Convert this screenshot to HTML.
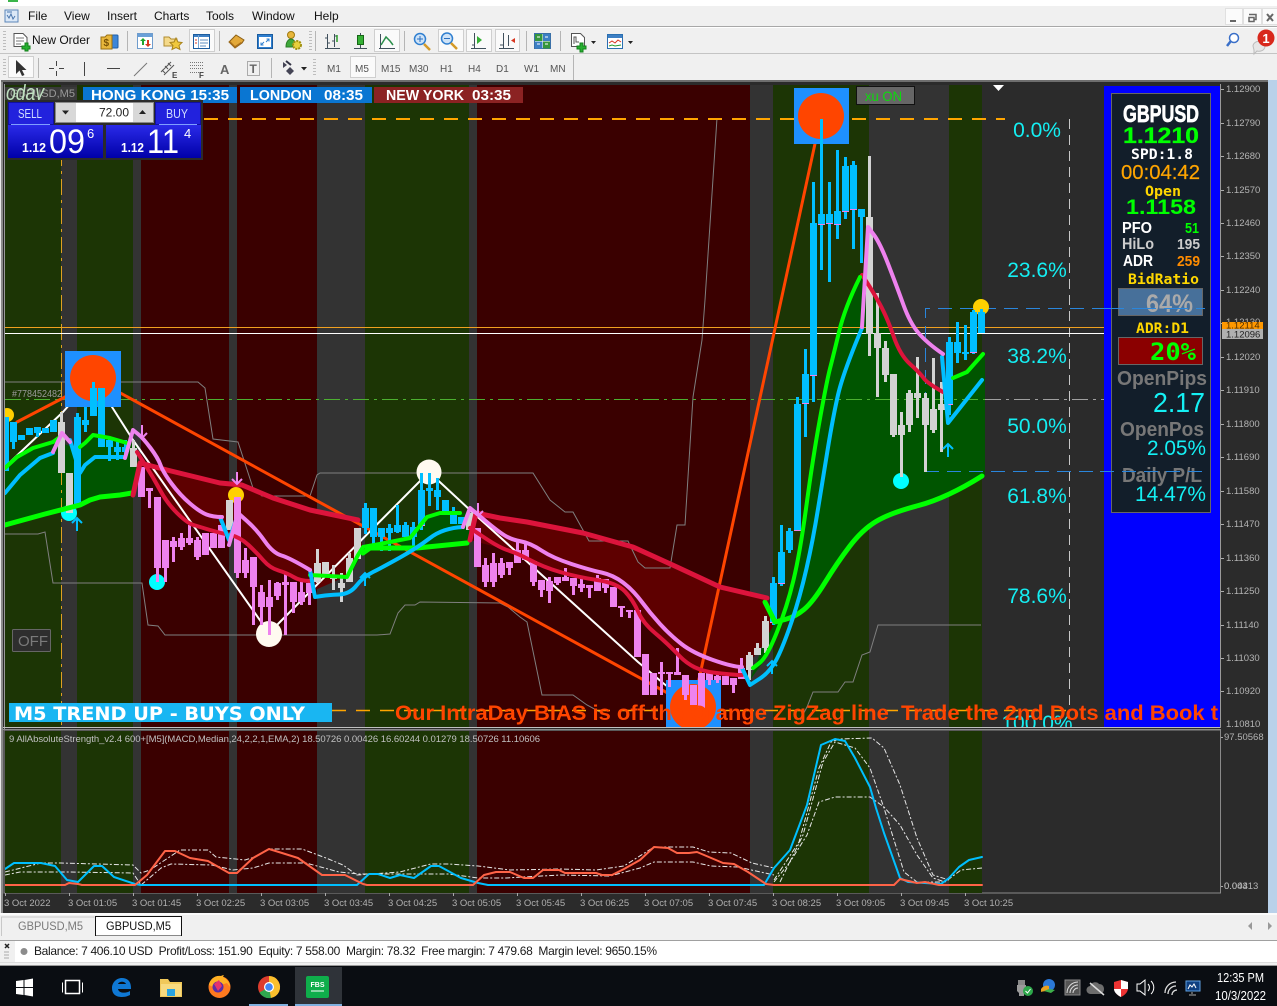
<!DOCTYPE html>
<html><head><meta charset="utf-8"><title>MT4 GBPUSD,M5</title>
<style>
html,body{margin:0;padding:0;background:#f0f0f0;width:1277px;height:1006px;overflow:hidden}
svg{display:block}
text{font-family:"Liberation Sans",sans-serif}
.ma{fill:none;stroke-linejoin:round;stroke-linecap:round}
.m{font-size:12px;fill:#111}
.tf{font-size:10px;fill:#555}
.pr{font-size:9.5px;fill:#b4b4b4}
.tm{font-size:9.5px;fill:#b0b0b0}
.fib{font-size:21px;fill:#14eef2;text-anchor:middle}
.mono{font-family:"DejaVu Sans Mono",monospace;font-weight:bold}
.b{font-weight:bold}
.ses{font-size:14.5px;font-weight:bold;fill:#fff}
.pb{fill:#fafafa;stroke:#cfcfcf}
</style></head><body>
<svg xmlns="http://www.w3.org/2000/svg" width="1277" height="1006" viewBox="0 0 1277 1006">
<defs>
<clipPath id="cm"><rect x="5" y="85" width="1215" height="642"/></clipPath>
<clipPath id="cs"><rect x="5" y="731" width="1215" height="162"/></clipPath>
<clipPath id="ct"><rect x="395" y="695" width="825" height="32"/></clipPath>
<linearGradient id="bq" x1="0" y1="0" x2="0" y2="1"><stop offset="0" stop-color="#2a2ae8"/><stop offset="1" stop-color="#0000a8"/></linearGradient>
</defs>

<!-- window chrome -->
<rect width="1277" height="1006" fill="#f0f0f0"/>
<rect width="1277" height="6" fill="#fff"/>
<rect x="8" y="0" width="10" height="2" fill="#3bb54a"/>
<rect y="26" width="1277" height="1" fill="#a8a8a8"/>
<rect y="53" width="1277" height="1" fill="#c4c4c4"/>
<rect x="0" y="27" width="1277" height="1" fill="#fff"/>

<!-- menu -->
<g transform="translate(4,8)"><rect x="1" y="2" width="13" height="12" fill="#dbe8f7" stroke="#5b86b8"/><path d="M3 4h5M3 7l2 3 2-4 2 5 2-3" fill="none" stroke="#4a76ad"/></g>
<text class="m" x="28" y="20">File</text><text class="m" x="64" y="20">View</text><text class="m" x="107" y="20">Insert</text><text class="m" x="154" y="20">Charts</text><text class="m" x="206" y="20">Tools</text><text class="m" x="252" y="20">Window</text><text class="m" x="314" y="20">Help</text>
<g fill="#fbfbfb" stroke="#e0e0e0"><rect x="1225.500" y="8.500" width="17" height="16"/><rect x="1243.500" y="8.500" width="18" height="16"/><rect x="1262.500" y="8.500" width="15" height="16"/></g>
<path d="M1230 21h6" stroke="#666" stroke-width="2"/>
<path d="M1249 14.500h7v5h-2M1249 17.500h5v4h-5z" fill="none" stroke="#666" stroke-width="1.500"/>
<path d="M1267 14l6 7M1273 14l-6 7" stroke="#666" stroke-width="2"/>

<!-- toolbar 1 -->
<g fill="#bdbdbd"><rect x="3" y="31" width="3" height="1"/><rect x="3" y="34" width="3" height="1"/><rect x="3" y="37" width="3" height="1"/><rect x="3" y="40" width="3" height="1"/><rect x="3" y="43" width="3" height="1"/><rect x="3" y="46" width="3" height="1"/><rect x="3" y="49" width="3" height="1"/>
<rect x="3" y="59" width="3" height="1"/><rect x="3" y="62" width="3" height="1"/><rect x="3" y="65" width="3" height="1"/><rect x="3" y="68" width="3" height="1"/><rect x="3" y="71" width="3" height="1"/><rect x="3" y="74" width="3" height="1"/>
<rect x="309" y="31" width="3" height="1"/><rect x="309" y="34" width="3" height="1"/><rect x="309" y="37" width="3" height="1"/><rect x="309" y="40" width="3" height="1"/><rect x="309" y="43" width="3" height="1"/><rect x="309" y="46" width="3" height="1"/><rect x="309" y="49" width="3" height="1"/>
<rect x="313" y="59" width="3" height="1"/><rect x="313" y="62" width="3" height="1"/><rect x="313" y="65" width="3" height="1"/><rect x="313" y="68" width="3" height="1"/><rect x="313" y="71" width="3" height="1"/><rect x="313" y="74" width="3" height="1"/></g>
<path d="M127.500 31v20M219.500 31v20M315.500 31v20M404.500 31v20M526.500 31v20M560.500 31v20M38.500 58v20M271.500 58v20M573.500 55v25" stroke="#b5b5b5"/>
<!-- new order -->
<path d="M14 33.500h9l4 4v9h-13z" fill="#fff" stroke="#555"/><path d="M16 38h8M16 41h8M16 44h5" stroke="#777"/>
<path d="M22 46h3v-3h3v3h2v3h-2v2h-3v-2h-3z" fill="#26b030" stroke="#14801c"/>
<text x="32" y="44" font-size="12" fill="#111" textLength="58" lengthAdjust="spacingAndGlyphs">New Order</text>
<!-- money -->
<rect x="108" y="35" width="10" height="13" rx="1" fill="#3d86d8" stroke="#1f5fa8"/>
<path d="M101 37h4l2-2h5v14h-11z" fill="#e8b73c" stroke="#9a6f10"/><text x="103.500" y="46" font-size="10" font-weight="bold" fill="#7a5306">$</text>
<!-- market watch -->
<rect x="137.500" y="33.500" width="15" height="15" fill="#fff" stroke="#6f9ccc"/><rect x="138" y="34" width="14" height="3" fill="#6aa0d8"/>
<path d="M143 38l3 3h-2v4h-2v-4h-2z" fill="#1fa52d"/><path d="M148 47l-3-3h2v-4h2v4h2z" fill="#d9351f"/>
<!-- star folder -->
<path d="M164 37h5l2 2h6v7h-13z" fill="#f4d98a" stroke="#b08c30"/><path d="M176 38l2 4 4 .5-3 3 1 4-4-2-4 2 1-4-3-3 4-.5z" fill="#f0c83c" stroke="#a8821a"/>
<!-- pressed list -->
<rect class="pb" x="189.500" y="29.500" width="25" height="22"/>
<rect x="193.500" y="34.500" width="16" height="14" fill="#fff" stroke="#1b5c9e"/><rect x="194" y="35" width="15" height="2" fill="#3d7fc4"/><path d="M198.500 35v13" stroke="#7aa6d4"/><path d="M200 40h8M200 43h8M200 46h6" stroke="#5f8fc2"/><path d="M195 40h2M195 43h2" stroke="#d9351f"/>
<!-- book -->
<path d="M229 42l7-7 8 5-2 3-7 5z" fill="#e3a93a" stroke="#8b5f14"/><path d="M229 42l6 6 7-5-1-1-6 4-5-5z" fill="#a96e1a"/>
<!-- expand -->
<rect x="257.500" y="34.500" width="15" height="14" fill="#2f7fd0" stroke="#1b5c9e"/><rect x="259" y="37" width="12" height="10" fill="#fff"/><path d="M261 45l3-3M261 42.500v2.500h2.500M269 39l-3 3M269 41.500v-2.500h-2.500" stroke="#2f7fd0" fill="none"/>
<!-- people gear -->
<circle cx="291" cy="35" r="3.500" fill="#e8b73c" stroke="#a07a10"/><path d="M286 47c0-6 3-8 5-8s4 2 4 4l-3 4z" fill="#3ea83a" stroke="#2a7c26"/><circle cx="297" cy="45" r="4" fill="#e8d03c" stroke="#a09010" stroke-width="2" stroke-dasharray="2 1"/>
<!-- charts -->
<path d="M325 48.500h15M327.500 34v15M334.500 34v13M325 38h3M327 43h3M332 41h3M334 36h3" stroke="#40505c" fill="none"/><path d="M337 35v7" stroke="#2a9a2a" stroke-width="1.500"/>
<path d="M354 48.500h13M360.500 33v15" stroke="#40505c"/><rect x="357.500" y="35.500" width="6" height="9" fill="#35b035" stroke="#166616"/>
<rect class="pb" x="374.500" y="29.500" width="25" height="22"/><path d="M379 48.500h16M380.500 34v15" stroke="#40505c"/><path d="M381 45l5-8 4 4 3 4" fill="none" stroke="#2b8f4b" stroke-width="1.500"/>
<!-- zoom -->
<circle cx="420" cy="39" r="5.500" fill="#cfe3f7" stroke="#2f7fd0" stroke-width="1.500"/><path d="M417 39h6M420 36v6" stroke="#2a6fc0"/><path d="M424 44l6 6" stroke="#d49a28" stroke-width="2.500"/>
<rect class="pb" x="438.500" y="29.500" width="25" height="22"/><circle cx="447" cy="38.500" r="5.500" fill="#cfe3f7" stroke="#2f7fd0" stroke-width="1.500"/><path d="M444 38.500h6" stroke="#2a6fc0"/><path d="M451 43l6 6" stroke="#d49a28" stroke-width="2.500"/>
<rect class="pb" x="466.500" y="29.500" width="25" height="22"/><path d="M471 48.500h15M474.500 33v15M472 45h3" stroke="#40505c"/><path d="M477 36l5 4-5 4z" fill="#35b035"/>
<rect class="pb" x="495.500" y="29.500" width="24" height="22"/><path d="M499 48.500h15M503.500 33v15M500 45h3M508.500 35v11" stroke="#40505c"/><path d="M515 38l-4 2.500 4 2.500z" fill="#d9351f"/>
<!-- grid -->
<rect x="534.500" y="33.500" width="16" height="15" fill="#fff" stroke="#3a70a8"/><rect x="535" y="34" width="7.500" height="7" fill="#35963c"/><rect x="543" y="34" width="7" height="7" fill="#3d7fc4"/><rect x="535" y="41.500" width="7.500" height="7" fill="#3d7fc4"/><rect x="543" y="41.500" width="7" height="7" fill="#35963c"/><path d="M537 37h3M545 37h3M537 44h3M545 44h3" stroke="#fff"/>
<!-- new chart -->
<path d="M571.500 33.500h9l4 4v9h-13z" fill="#fff" stroke="#555"/><path d="M574 44v-7h2v5h3" fill="none" stroke="#555"/><path d="M577 46h3v-3h3v3h3v3h-3v3h-3v-3h-3z" fill="#26b030" stroke="#14801c"/><path d="M591 41h5l-2.500 3z" fill="#222"/>
<rect x="607.500" y="34.500" width="15" height="14" fill="#fff" stroke="#2a6fb0"/><rect x="608" y="35" width="14" height="3" fill="#3d7fc4"/><path d="M609 43l3-2 3 2 3-3 3 2" fill="none" stroke="#d9351f"/><path d="M609 46l3-1 3 1 6-1" fill="none" stroke="#2a9a2a"/><path d="M628 41h5l-2.500 3z" fill="#222"/>

<!-- magnifier + alert -->
<circle cx="1234" cy="38" r="4.500" fill="#fff" stroke="#3a6fc8" stroke-width="1.500"/><path d="M1230.500 41.500l-3.500 4.500" stroke="#3a6fc8" stroke-width="2.500"/>
<path d="M1253 46a6 5 0 1 1 4 5l-3 3v-4z" fill="#e6e6e6" stroke="#bbb"/>
<circle cx="1266" cy="38" r="8.500" fill="#d8281c"/><text x="1266" y="43" font-size="13" font-weight="bold" fill="#fff" text-anchor="middle">1</text>

<!-- toolbar 2 -->
<rect class="pb" x="8.500" y="56.500" width="25" height="21"/>
<path d="M16 60v14l3.500-3.500 2.500 5.500 2.500-1-2.500-5h4.500z" fill="#333"/>
<path d="M49 68.500h5M59 68.500h5M56.500 61v5M56.500 71v5" stroke="#444"/>
<path d="M84.500 62v14" stroke="#444"/>
<path d="M107 68.500h13" stroke="#444"/>
<path d="M134 76l13-13" stroke="#777"/>
<path d="M161 72l10-10M164 75l10-10M165 66l3 3M168 63l3 3M162 70l3 3" stroke="#555" fill="none"/><text x="172" y="78" font-size="8" font-weight="bold" fill="#444">E</text>
<path d="M190 62.500h13M190 65.500h13M190 68.500h13M190 72.500h13" stroke="#777" stroke-dasharray="1 1"/><text x="199" y="78" font-size="8" font-weight="bold" fill="#444">F</text>
<text x="220" y="74" font-size="13" font-weight="bold" fill="#666">A</text>
<rect x="247.500" y="61.500" width="12" height="14" fill="none" stroke="#666" stroke-dasharray="1 1"/><text x="249.500" y="73" font-size="12" font-weight="bold" fill="#666">T</text>
<path d="M283 62l4 3-4 3zM290 67l4 4-4 4-4-4z" fill="#445"/><path d="M286 61l5 4" stroke="#334" stroke-width="2"/><path d="M301 67h6l-3 3.500z" fill="#222"/>
<rect class="pb" x="350.500" y="56.500" width="25" height="21"/>
<text class="tf" x="327" y="72">M1</text><text class="tf" x="355" y="72">M5</text><text class="tf" x="381" y="72">M15</text><text class="tf" x="409" y="72">M30</text><text class="tf" x="440" y="72">H1</text><text class="tf" x="468" y="72">H4</text><text class="tf" x="496" y="72">D1</text><text class="tf" x="524" y="72">W1</text><text class="tf" x="550" y="72">MN</text>

<!-- chart window -->
<rect x="0" y="80" width="1" height="833" fill="#e8e8e8"/>
<rect x="1" y="80" width="2" height="833" fill="#8a8a8a"/>
<rect x="3" y="80" width="1265" height="833" fill="#2b2b2b"/>
<rect x="1" y="80" width="1267" height="2" fill="#6e6e6e"/>
<rect x="1268" y="80" width="9" height="833" fill="#b9d1ea"/>
<rect x="3" y="82" width="2" height="831" fill="#2b2b2b"/>
<rect x="4" y="84" width="1" height="645" fill="#9a9a9a"/>

<g clip-path="url(#cm)">
<path fill="#1c3505" d="M5 84H61V727H5zM77 84H133V727H77zM365 84H469V727H365zM773 84H869V727H773zM949 84H982V727H949z"/>
<path fill="#3a0000" d="M141 84H229V727H141zM237 84H317V727H237zM477 84H750V727H477z"/>
<path fill="#333333" d="M61 84H77V727H61zM133 84H141V727H133zM229 84H237V727H229zM317 84H365V727H317zM469 84H477V727H469zM750 84H773V727H750zM869 84H949V727H869z"/>

<!-- fills -->
<path fill="#005500" d="M5 468L17 457 33 448 53 442 60 437 66 445 80 447 85 443 93 435 110 438 127 443 136 442 138 465 133 495 120 495 100 497 90 500 80 505 45 514 5 525z"/>
<path fill="#5e0000" d="M140 463L167 470 220 483 242 485 273 498 310 510 358 520 362 545 345 577 315 590 310 581 300 581 287 573 270 568 257 553 240 537 220 533 200 527 187 523 167 503 153 477 137 452z"/>
<path fill="#005500" d="M345 577L358 555 363 547 390 542 410 538 427 517 440 513 467 513 470 540 467 543 393 548 370 548 363 553 350 575z"/>
<path fill="#5e0000" d="M470 513L500 518 527 522 583 533 633 547 677 567 720 587 767 598 775 622 767 640 745 668 733 675 693 670 667 643 643 623 633 600 617 583 577 577 543 567 517 553 500 548 470 540z"/>
<path fill="#005500" d="M750 680L767 657 787 607 800 553 813 457 833 357 845 307 860 277 872 290 887 317 900 355 920 373 943 392 953 378 967 372 985 354 985 476 947 498 890 513 862 530 837 563 813 602 795 617 775 623 765 640z"/>

<!-- envelope -->
<polyline fill="none" stroke="#7f7f7f" points="5,382 198,382 205,388 213,439 238,442 253,488 262,496 310,496 317,475 320,473 533,473 550,500 565,512 573,512 589,541 628,541 638,562 645,568 670,568 677,525 685,525 693,397 702,340 705,300 717,118"/>
<polyline fill="none" stroke="#7f7f7f" points="5,534 38,534 45,532 53,583 142,583 148,625 158,626 165,635 377,635 390,634 398,613 405,605 415,605 420,602 500,603 508,607 520,617 527,622 542,695 573,695 587,705 600,712"/>
<polyline fill="none" stroke="#7f7f7f" points="800,720 807,707 813,692 838,692 845,682 853,682 862,655 870,652 878,625 981,625"/>

<!-- horizontal levels -->
<path d="M204 119H1005" stroke="#ffa500" stroke-width="2" stroke-dasharray="14 10"/>
<path d="M332 710.500H1069" stroke="#ffa500" stroke-width="1.500" stroke-dasharray="14 10"/>
<path d="M5 399.500H985" stroke="#4cb030" stroke-dasharray="16 5 3 5"/>
<path d="M985 399.500H1104" stroke="#a0a0a0" stroke-dasharray="16 5 3 5"/>
<path d="M61.500 150V727" stroke="#e0a020" stroke-dasharray="16 5 3 5"/>
<path d="M1069.500 119V711" stroke="#c8c8c8" stroke-dasharray="10 6"/>
<path d="M5 327.500H1104" stroke="#f0a020"/>
<path d="M5 333.500H1104" stroke="#fff"/>
<path d="M925.500 472V308.500H1204" fill="none" stroke="#2a86dc" stroke-dasharray="14 8"/>
<path d="M925 471.500H1204" fill="none" stroke="#2a86dc" stroke-dasharray="14 8"/>

<!-- zigzag -->
<polyline class="ma" stroke="#ff4500" stroke-width="3" points="17,422 65,397 93,378 693,707 821,116"/>
<polyline class="ma" stroke="#fff" stroke-width="2" points="8,464 63,412 93,378 112,407 133,440 269,633 429,472 470,510 638,662 663,683 693,707"/>

<!-- squares -->
<rect x="65" y="351" width="56" height="56" fill="#1e90ff"/><circle cx="93" cy="378" r="23" fill="#ff4500"/>
<rect x="794" y="88" width="55" height="56" fill="#1e90ff"/><circle cx="821" cy="116" r="23" fill="#ff4500"/>
<rect x="666" y="680" width="55" height="60" fill="#1e90ff"/><circle cx="693" cy="707" r="23" fill="#ff4500"/>

<!-- white circles -->
<circle cx="269" cy="634" r="13" fill="#fffaf0"/><circle cx="429" cy="472" r="12.500" fill="#fffaf0"/>

<!-- yellow and cyan dots -->
<circle cx="7" cy="415" r="7" fill="#ffd000"/><circle cx="236" cy="495" r="8" fill="#ffd000"/><circle cx="981" cy="307" r="8" fill="#ffd000"/>
<circle cx="69" cy="513" r="8" fill="#00ffff"/><circle cx="157" cy="582" r="8" fill="#00ffff"/><circle cx="901" cy="481" r="8" fill="#00ffff"/>

<!-- candle wicks -->
<path fill="none" stroke="#00bfff" stroke-width="3" d="M13.500 422V449M37.500 427V437M77.500 413V505M85.500 407V432M93.500 382V416M109.500 437V461M117.500 439V460M125.500 440V458M365.500 503V534M373.500 508V547M381.500 528V551M389.500 524V551M397.500 505V533M405.500 522V537M413.500 522V546M421.500 473V530M429.500 473V506M437.500 478V510M453.500 507V524M773.500 577V625M781.500 525V586M789.500 528V553M797.500 397V530M805.500 349V437M813.500 182V402M821.500 119V270M829.500 182V282M837.500 150V239M845.500 157V219M853.500 161V249M861.500 209V263M949.500 337V415M957.500 322V363M965.500 325V360M973.500 310V354M981.500 309V333"/>
<path fill="none" stroke="#ee82ee" stroke-width="3" d="M149.500 488V508M157.500 497V582M165.500 540V582M173.500 537V562M181.500 533V550M189.500 525V545M197.500 537V560M205.500 533V555M237.500 497V578M245.500 548V578M253.500 557V625M261.500 585V625M269.500 580V635M277.500 582V600M285.500 573V635M293.500 582V613M301.500 582V605M309.500 582V605M485.500 558V587M493.500 553V587M501.500 558V578M509.500 562V575M517.500 541V563M525.500 544V560M533.500 561V586M541.500 580V597M549.500 577V603M557.500 577V585M565.500 568V581M573.500 578V595M581.500 578V592M589.500 585V598M597.500 575V591M605.500 579V593M621.500 606V617M629.500 610V618M661.500 662V695M669.500 672V687M677.500 648V675M685.500 675V700M709.500 672V685M717.500 673V683M733.500 678V693M741.500 658V679"/>
<path fill="none" stroke="#d3d3d3" stroke-width="3" d="M61.500 412V473M133.500 440V467M317.500 549V583M333.500 565V590M341.500 573V602M349.500 553V582M749.500 652V680M757.500 643V655M765.500 616V653M869.500 156V356M877.500 293V397M885.500 341V382M893.500 374V437M901.500 412V477M909.500 390V432M917.500 357V418M925.500 393V472M933.500 358V433M941.500 382V452"/>
<!-- candle bodies -->
<path fill="none" stroke="#00bfff" stroke-width="7" d="M5.500 417V471M13.500 422V442M21.500 435V440M29.500 428V435M37.500 427V433M45.500 428V433M53.500 420V432M77.500 417V505M85.500 420V425M93.500 388V416M101.500 388V447M109.500 440V447M117.500 447V452M125.500 447V452M365.500 508V528M373.500 508V537M381.500 528V537M389.500 528V533M397.500 525V532M405.500 525V537M413.500 527V537M421.500 490V525M429.500 488V491M437.500 490V497M445.500 500V513M453.500 512V524M461.500 517V524M773.500 583V622M781.500 552V583M789.500 531V550M797.500 404V530M805.500 374V403M813.500 223V375M821.500 214V224M829.500 214V223M837.500 211V224M845.500 166V211M853.500 165V209M861.500 209V217M949.500 342V404M957.500 342V353M965.500 352V354M973.500 312V352M981.500 312V333"/>
<path fill="none" stroke="#ee82ee" stroke-width="7" d="M141.500 467V497M149.500 488V491M157.500 497V568M165.500 540V568M173.500 541V547M181.500 538V547M189.500 538V543M197.500 540V557M205.500 533V555M213.500 533V548M221.500 525V548M237.500 497V573M245.500 560V573M253.500 557V587M261.500 592V607M269.500 597V607M277.500 583V596M285.500 582V585M293.500 582V602M301.500 592V602M309.500 583V593M477.500 528V567M485.500 565V582M493.500 563V582M501.500 563V575M509.500 562V568M517.500 550V563M525.500 550V560M533.500 561V582M541.500 580V590M549.500 581V591M557.500 577V583M565.500 577V581M573.500 578V586M581.500 584V588M589.500 585V588M597.500 578V591M605.500 579V588M613.500 587V607M621.500 606V608M629.500 610V612M637.500 610V657M645.500 654V695M653.500 673V695M661.500 672V674M669.500 672V674M677.500 672V675M685.500 675V695M693.500 685V705M701.500 673V708M709.500 672V680M717.500 676V680M725.500 676V685M733.500 678V685M741.500 668V679"/>
<path fill="none" stroke="#d3d3d3" stroke-width="7" d="M61.500 422V473M69.500 473V513M133.500 448V467M229.500 500V530M317.500 563V582M325.500 562V577M333.500 576V579M341.500 583V588M349.500 558V582M357.500 528V559M469.500 513V530M749.500 655V670M757.500 648V655M765.500 621V648M869.500 217V334M877.500 333V348M885.500 348V375M893.500 374V435M901.500 425V435M909.500 393V425M917.500 393V398M925.500 398V425M933.500 409V430M941.500 404V410"/>
<path fill="none" stroke="#ee82ee" stroke-width="7" d="M77.500 505v1M797.500 530v1M805.500 403v1M813.500 375v1M821.500 224v1M829.500 223v1M837.500 224v1M845.500 211v1M853.500 209v1M949.500 404v1M973.500 352v1M421.500 525v1M773.500 622v1M781.500 583v1"/>

<!-- moving averages: slow -->
<polyline class="ma" stroke="#00ff00" stroke-width="5" points="5,525 45,514 80,505 90,500 100,497 120,495 132,493"/>
<polyline class="ma" stroke="#00ff00" stroke-width="5" points="363,553 370,548 393,548 417,548 467,543"/>
<path class="ma" stroke="#00ff00" stroke-width="5" d="M765 602L775 622L785 619.500Q795 617 804 609.500Q813 602 825 582.500Q837 563 849.500 546.500Q862 530 876 521.500Q890 513 918.500 505.500Q947 498 982 476"/>
<polyline class="ma" stroke="#dc143c" stroke-width="5" points="133,495 140,463 167,470 220,483 242,485 273,498 310,510 358,520"/>
<polyline class="ma" stroke="#dc143c" stroke-width="5" points="470,540 476,513 500,518 527,522 583,533 633,547 677,567 720,587 767,598"/>
<!-- fast -->
<path class="ma" stroke="#dc143c" stroke-width="4" d="M137 452L145 464.500Q153 477 160 490Q167 503 177 513Q187 523 193.500 525Q200 527 210 530Q220 533 230 535Q240 537 248.500 545Q257 553 263.500 560.500Q270 568 278.500 570.500Q287 573 293.500 577Q300 581 310 581"/>
<path class="ma" stroke="#dc143c" stroke-width="4" d="M470 528L485 538Q500 548 508.500 550.500Q517 553 530 560Q543 567 560 572Q577 577 597 580Q617 583 625 591.500Q633 600 638 611.500Q643 623 655 633Q667 643 680 656.500Q693 670 713 672.500Q733 675 742 675"/>
<path class="ma" stroke="#dc143c" stroke-width="4" d="M862 275L867 282.500Q872 290 879.500 303.500Q887 317 893.500 336Q900 355 910 364Q920 373 923.500 378Q927 383 943 392"/>
<polyline class="ma" stroke="#00ff00" stroke-width="4" points="5,468 17,457 33,448 53,442 60,437"/>
<polyline class="ma" stroke="#00ff00" stroke-width="4" points="80,447 85,443 93,435 110,438 127,443"/>
<polyline class="ma" stroke="#00ff00" stroke-width="4" points="310,575 347,577 358,555 363,547 390,542 410,538 427,517 440,513 460,513"/>
<path class="ma" stroke="#00ff00" stroke-width="4" d="M753 668L760 662.500Q767 657 777 632Q787 607 793.500 580Q800 553 806.500 505Q813 457 820 418.500Q827 380 830 368.500Q833 357 839 332Q845 307 860 277"/>
<polyline class="ma" stroke="#00ff00" stroke-width="4" points="953,378 967,372 983,354"/>
<polyline class="ma" stroke="#00bfff" stroke-width="4" points="5,493 20,475 40,458 53,453"/>
<polyline class="ma" stroke="#00bfff" stroke-width="4" points="70,440 80,473 85,465 95,457 123,457"/>
<polyline class="ma" stroke="#00bfff" stroke-width="4" points="220,517 229,540 236,520"/>
<path class="ma" stroke="#00bfff" stroke-width="4" d="M310 570L315 597L321.500 596Q328 595 339 594.500Q350 594 356.500 585.500Q363 577 373 572Q383 567 400 557.500Q417 548 430 538Q443 528 463 527"/>
<path class="ma" stroke="#00bfff" stroke-width="4" d="M742 668L750 685L760 678.500Q770 672 776.500 659.500Q783 647 791.500 622Q800 597 806.500 568.500Q813 540 818 509Q823 478 828 447.500Q833 417 838 395Q843 373 862 328"/>
<polyline class="ma" stroke="#00bfff" stroke-width="4" points="942,357 948,423 982,380"/>
<polyline class="ma" stroke="#ee82ee" stroke-width="4" points="53,452 62,433 70,442"/>
<path class="ma" stroke="#ee82ee" stroke-width="4" d="M125 458L133 430L138 434Q143 438 150.500 448Q158 458 160.500 465Q163 472 171.500 483.500Q180 495 190 503.500Q200 512 206.500 514.500Q213 517 222 517"/>
<path class="ma" stroke="#ee82ee" stroke-width="4" d="M229 545L238 513L247.500 521.500Q257 530 265 541.500Q273 553 281.500 555.500Q290 558 310 570"/>
<path class="ma" stroke="#ee82ee" stroke-width="4" d="M463 527L470 508L485 520.500Q500 533 506.500 536.500Q513 540 521.500 541.500Q530 543 541.500 550.500Q553 558 571.500 564Q590 570 601.500 572.500Q613 575 623 582.500Q633 590 641.500 601.500Q650 613 660 624Q670 635 681.500 644Q693 653 713 660Q733 667 742 667"/>
<path class="ma" stroke="#ee82ee" stroke-width="4" d="M862 327L868 227L874 235Q880 243 888.500 265Q897 287 903.500 305Q910 323 918.500 333Q927 343 943 354"/>

<!-- arrows -->
<g fill="none" stroke-width="2">
<path stroke="#00bfff" d="M77 531V519M72 523l5-5 5 5M365 586V574M360 578l5-5 5 5M772 674V662M767 666l5-5 5 5M948 457V445M943 449l5-5 5 5"/>
<path stroke="#ee82ee" d="M142 425V438M137 433l5 5 5-5M237 472V484M232 479l5 5 5-5M478 503V516M473 511l5 5 5-5"/>
</g>

<!-- white marker -->
<path d="M993 85h11l-5.500 6z" fill="#fff"/>

<!-- fib labels -->
<text class="fib" x="1037" y="137">0.0%</text><text class="fib" x="1037" y="277">23.6%</text><text class="fib" x="1037" y="363">38.2%</text><text class="fib" x="1037" y="433">50.0%</text><text class="fib" x="1037" y="503">61.8%</text><text class="fib" x="1037" y="603">78.6%</text><text class="fib" x="1037" y="730">100.0%</text>
</g>

<!-- blue info panel -->
<rect x="1104" y="86" width="116" height="641" fill="#0000ff"/>
<rect x="1111.500" y="93.500" width="99" height="419" fill="#121e2a" stroke="#666"/>
<text x="1123" y="122" font-size="24" font-weight="bold" fill="#fff" stroke="#fff" stroke-width=".7" textLength="76" lengthAdjust="spacingAndGlyphs">GBPUSD</text>
<text x="1123" y="143" font-size="22" font-weight="bold" fill="#00ff00" stroke="#00ff00" stroke-width=".3" textLength="76" lengthAdjust="spacingAndGlyphs">1.1210</text>
<text class="mono" x="1131" y="159" font-size="14" fill="#fff" textLength="62" lengthAdjust="spacingAndGlyphs">SPD:1.8</text>
<text x="1121" y="179" font-size="20" fill="#ffa500" stroke="#ffa500" stroke-width=".2" textLength="79" lengthAdjust="spacingAndGlyphs">00:04:42</text>
<text class="mono" x="1145" y="196" font-size="14" fill="#ffd700" textLength="36" lengthAdjust="spacingAndGlyphs">Open</text>
<text x="1126" y="214" font-size="21" font-weight="bold" fill="#00ff00" textLength="70" lengthAdjust="spacingAndGlyphs">1.1158</text>
<text x="1122" y="233" font-size="16" font-weight="bold" fill="#fff" textLength="30" lengthAdjust="spacingAndGlyphs">PFO</text>
<text x="1185" y="233" font-size="15" font-weight="bold" fill="#00ff00" textLength="14" lengthAdjust="spacingAndGlyphs">51</text>
<text x="1122" y="249" font-size="16" font-weight="bold" fill="#ccc" textLength="32" lengthAdjust="spacingAndGlyphs">HiLo</text>
<text x="1177" y="249" font-size="15" font-weight="bold" fill="#ccc" textLength="23" lengthAdjust="spacingAndGlyphs">195</text>
<text x="1123" y="266" font-size="16" font-weight="bold" fill="#fff" textLength="30" lengthAdjust="spacingAndGlyphs">ADR</text>
<text x="1177" y="266" font-size="15" font-weight="bold" fill="#ff8c00" textLength="23" lengthAdjust="spacingAndGlyphs">259</text>
<text class="mono" x="1128" y="284" font-size="14" fill="#ffd700" textLength="71" lengthAdjust="spacingAndGlyphs">BidRatio</text>
<rect x="1118.500" y="288.500" width="84" height="27" fill="#47709a" stroke="#666"/>
<text x="1146" y="312" font-size="25" font-weight="bold" fill="#aaa" textLength="47" lengthAdjust="spacingAndGlyphs">64%</text>
<path d="M1100 308.500H1205" stroke="#2a86dc" stroke-dasharray="24 8"/>
<text class="mono" x="1136" y="333" font-size="14" fill="#ffd700" textLength="53" lengthAdjust="spacingAndGlyphs">ADR:D1</text>
<rect x="1118.500" y="337.500" width="84" height="27" fill="#8b0000" stroke="#666"/>
<text class="mono" x="1150" y="360" font-size="24" fill="#00ff00" textLength="46" lengthAdjust="spacingAndGlyphs">20%</text>
<text x="1117" y="385" font-size="20" font-weight="bold" fill="#777" textLength="90" lengthAdjust="spacingAndGlyphs">OpenPips</text>
<text x="1153" y="412" font-size="28" fill="#14f0f4" textLength="52" lengthAdjust="spacingAndGlyphs">2.17</text>
<text x="1120" y="436" font-size="20" font-weight="bold" fill="#777" textLength="84" lengthAdjust="spacingAndGlyphs">OpenPos</text>
<text x="1147" y="455" font-size="21" fill="#14f0f4" textLength="59" lengthAdjust="spacingAndGlyphs">2.05%</text>
<text x="1122" y="482" font-size="20" font-weight="bold" fill="#777" textLength="80" lengthAdjust="spacingAndGlyphs">Daily P/L</text>
<path d="M1100 471.500H1205" stroke="#2a86dc" stroke-dasharray="14 8"/>
<text x="1135" y="501" font-size="21" fill="#14f0f4" textLength="71" lengthAdjust="spacingAndGlyphs">14.47%</text>

<!-- overlays top-left -->
<rect x="5" y="87" width="72" height="13" fill="#3a3a3a"/>
<text x="10" y="97" font-size="11" fill="#9a9a9a" textLength="65" lengthAdjust="spacingAndGlyphs">GBPUSD,M5</text>
<text x="6" y="100" font-size="22" font-style="italic" fill="#bfe0c0" textLength="38" lengthAdjust="spacingAndGlyphs">oday</text>
<rect x="83" y="87" width="154" height="16" fill="#0a76d2"/><rect x="240" y="87" width="132" height="16" fill="#0a76d2"/><rect x="374" y="87" width="149" height="16" fill="#8b2222"/>
<text class="ses" x="91" y="100" textLength="138" lengthAdjust="spacingAndGlyphs">HONG KONG 15:35</text>
<text class="ses" x="250" y="100" textLength="62" lengthAdjust="spacingAndGlyphs">LONDON</text><text class="ses" x="324" y="100" textLength="39" lengthAdjust="spacingAndGlyphs">08:35</text>
<text class="ses" x="386" y="100" textLength="78" lengthAdjust="spacingAndGlyphs">NEW YORK</text><text class="ses" x="472" y="100" textLength="39" lengthAdjust="spacingAndGlyphs">03:35</text>

<!-- trade panel -->
<rect x="7" y="100" width="196" height="60" fill="#2b2b2b"/>
<rect x="8.500" y="102.500" width="45" height="22" fill="#2222dd" stroke="#1010a0"/>
<rect x="155.500" y="102.500" width="45" height="22" fill="#2222dd" stroke="#1010a0"/>
<path d="M11 124.500h39M159 124.500h38" stroke="#7f9fff"/>
<text x="18" y="118" font-size="12.500" fill="#d0dcff" textLength="24" lengthAdjust="spacingAndGlyphs">SELL</text>
<text x="166" y="118" font-size="12.500" fill="#d0dcff" textLength="22" lengthAdjust="spacingAndGlyphs">BUY</text>
<rect x="55.500" y="102.500" width="98" height="20" fill="#d8d8d8" stroke="#888"/>
<rect x="76" y="103" width="57" height="19" fill="#fff"/>
<path d="M62 110.500h7l-3.500 4zM139 114h7l-3.500-4z" fill="#222"/>
<text x="129" y="116.500" font-size="12" fill="#222" text-anchor="end">72.00</text>
<rect x="8" y="125" width="95" height="33" fill="url(#bq)"/><rect x="106" y="125" width="95" height="33" fill="url(#bq)"/>
<text x="22" y="152" font-size="13" font-weight="bold" fill="#fff" textLength="24" lengthAdjust="spacingAndGlyphs">1.12</text>
<text x="49" y="153" font-size="34" fill="#fff" textLength="36" lengthAdjust="spacingAndGlyphs">09</text>
<text x="87" y="138" font-size="13" fill="#fff">6</text>
<text x="121" y="152" font-size="13" font-weight="bold" fill="#fff" textLength="23" lengthAdjust="spacingAndGlyphs">1.12</text>
<text x="147" y="153" font-size="34" fill="#fff" textLength="32" lengthAdjust="spacingAndGlyphs">11</text>
<text x="184" y="138" font-size="13" fill="#fff">4</text>

<!-- chart labels -->
<rect x="856.500" y="86.500" width="58" height="18" fill="#666" stroke="#111"/>
<text x="865" y="101" font-size="14" fill="#0cdc0c" textLength="37" lengthAdjust="spacingAndGlyphs">xu ON</text>
<rect x="12.500" y="629.500" width="38" height="22" fill="#2e2e2e" stroke="#666" rx="1"/>
<text x="18" y="646" font-size="15" fill="#7a7a7a">OFF</text>
<text x="12" y="397" font-size="10" fill="#9a9a9a" textLength="50" lengthAdjust="spacingAndGlyphs">#778452482</text>
<rect x="9" y="703" width="323" height="19" fill="#19b6f2"/>
<text x="14" y="720" font-size="19" font-weight="bold" fill="#fff" textLength="291" lengthAdjust="spacingAndGlyphs" style="font-family:'DejaVu Sans',sans-serif">M5 TREND UP - BUYS ONLY</text>
<g clip-path="url(#ct)"><text x="395" y="720" font-size="21" font-weight="bold" fill="#ff4500" textLength="823" lengthAdjust="spacingAndGlyphs" xml:space="preserve">Our IntraDay BIAS is off the Orange ZigZag line  Trade the 2nd Dots and Book t</text></g>

<!-- window separator -->
<rect x="3" y="727" width="1218" height="1" fill="#c0c0c0"/>
<rect x="3" y="729" width="1218" height="1" fill="#8c8c8c"/>
<rect x="1220" y="84" width="1" height="644" fill="#9a9a9a"/>

<!-- price axis -->
<g class="prg">
<text class="pr" x="1226" y="92">1.12900</text><text class="pr" x="1226" y="126">1.12790</text><text class="pr" x="1226" y="159">1.12680</text><text class="pr" x="1226" y="193">1.12570</text><text class="pr" x="1226" y="226">1.12460</text><text class="pr" x="1226" y="259">1.12350</text><text class="pr" x="1226" y="293">1.12240</text><text class="pr" x="1226" y="325">1.12130</text><text class="pr" x="1226" y="360">1.12020</text><text class="pr" x="1226" y="393">1.11910</text><text class="pr" x="1226" y="427">1.11800</text><text class="pr" x="1226" y="460">1.11690</text><text class="pr" x="1226" y="494">1.11580</text><text class="pr" x="1226" y="527">1.11470</text><text class="pr" x="1226" y="561">1.11360</text><text class="pr" x="1226" y="594">1.11250</text><text class="pr" x="1226" y="628">1.11140</text><text class="pr" x="1226" y="661">1.11030</text><text class="pr" x="1226" y="694">1.10920</text><text class="pr" x="1226" y="727">1.10810</text>
</g>
<path stroke="#aaa" d="M1221 89.500h3M1221 123.500h3M1221 156.500h3M1221 190.500h3M1221 223.500h3M1221 256.500h3M1221 290.500h3M1221 323.500h3M1221 357.500h3M1221 390.500h3M1221 424.500h3M1221 457.500h3M1221 491.500h3M1221 524.500h3M1221 558.500h3M1221 591.500h3M1221 625.500h3M1221 658.500h3M1221 691.500h3"/>
<rect x="1222" y="322" width="41" height="7" fill="#ff9800"/>
<text x="1226" y="328.500" font-size="9.500" fill="#4a2c00">1.12114</text>
<rect x="1222" y="329" width="41" height="10" fill="#b0b0b0"/>
<text x="1226" y="337.500" font-size="9.500" fill="#222">1.12096</text>

<!-- sub window -->
<rect x="4" y="730" width="1216.500" height="163" fill="#2b2b2b" stroke="#8a8a8a"/>
<g clip-path="url(#cs)">
<path fill="#1c3505" d="M5 731H61V893H5zM77 731H133V893H77zM365 731H469V893H365zM773 731H869V893H773zM949 731H982V893H949z"/>
<path fill="#3a0000" d="M141 731H229V893H141zM237 731H317V893H237zM477 731H750V893H477z"/>
<path fill="#333333" d="M61 731H77V893H61zM133 731H141V893H133zM229 731H237V893H229zM317 731H365V893H317zM469 731H477V893H469zM750 731H773V893H750zM869 731H949V893H869z"/>
<g fill="none" stroke="#e6e6e6" stroke-dasharray="5 2 2 2">
<polyline points="5,872 41,863 61,863 133,865 141,873 150,870 180,850 208,850 216,857 245,860 255,857 269,849 302,849 326,858 343,865 357,875 400,872 431,864 449,864 478,866 510,870 560,869 596,870 624,866 654,847 693,847 709,852 731,853 752,863 774,868"/>
<polyline points="5,875 20,872 69,872 133,873 141,885 161,868 171,864 212,865 233,870 253,868 269,863 306,863 339,872 359,874 449,874 478,878 506,878 560,875 610,876 640,868 654,862 693,862 711,866 738,867 774,875"/>
<polyline points="774,882 790,862 807,835 819,802 835,797 870,797 884,807 900,825 917,855 933,878 945,882 961,870 982,868"/>
<polyline points="774,880 799,842 819,768 831,742 839,739 872,738 884,748 900,785 917,838 933,875 949,880"/>
<polyline points="780,882 803,835 823,762 835,742 855,748 870,768 884,808 904,872 917,882 943,882"/>
</g>
<polyline class="ma" stroke="#00bfff" stroke-width="2" points="5,869 14,863 41,863 55,866 67,880 78,882 94,866 102,866 114,877 135,884 141,885 357,885 369,874 378,874 390,878 400,875 414,878 431,866 439,866 461,878 478,883 488,885 764,885 774,868 790,850 807,805 821,745 835,739 845,741 855,758 870,787 876,808 884,833 900,878 908,882 941,884 949,878 959,867 969,860 982,857"/>
<polyline class="ma" stroke="#ff6347" stroke-width="2" points="5,885 65,885 69,883 78,884 82,885 135,885 147,875 165,851 175,851 190,858 208,861 229,873 237,873 253,858 269,849 282,853 298,858 322,875 345,875 363,884 367,885 473,885 484,875 496,872 510,872 524,878 533,878 543,870 559,870 565,873 596,873 602,875 612,875 624,869 640,860 654,847 668,848 677,853 689,853 697,852 723,863 734,864 748,872 766,884 774,885 894,885 900,879 917,883 925,882 939,885 982,885"/>
</g>
<text x="9" y="742" font-size="9.500" fill="#c0c0c0" textLength="531" lengthAdjust="spacing">9 AllAbsoluteStrength_v2.4 600+[M5](MACD,Median,24,2,2,1,EMA,2) 18.50726 0.00426 16.60244 0.01279 18.50726 11.10606</text>
<text class="pr" x="1224" y="740">97.50568</text>
<text class="pr" x="1224" y="889">0.04313</text>
<text class="pr" x="1224" y="889">0.004</text>
<path stroke="#aaa" d="M1221 737.500h2M1221 886.500h2"/>

<!-- time axis -->
<path stroke="#aaa" d="M5.500 893v3M69.500 893v3M133.500 893v3M197.500 893v3M261.500 893v3M325.500 893v3M389.500 893v3M453.500 893v3M517.500 893v3M581.500 893v3M645.500 893v3M709.500 893v3M773.500 893v3M837.500 893v3M901.500 893v3M965.500 893v3"/>
<text class="tm" x="4" y="906">3 Oct 2022</text><text class="tm" x="68" y="906">3 Oct 01:05</text><text class="tm" x="132" y="906">3 Oct 01:45</text><text class="tm" x="196" y="906">3 Oct 02:25</text><text class="tm" x="260" y="906">3 Oct 03:05</text><text class="tm" x="324" y="906">3 Oct 03:45</text><text class="tm" x="388" y="906">3 Oct 04:25</text><text class="tm" x="452" y="906">3 Oct 05:05</text><text class="tm" x="516" y="906">3 Oct 05:45</text><text class="tm" x="580" y="906">3 Oct 06:25</text><text class="tm" x="644" y="906">3 Oct 07:05</text><text class="tm" x="708" y="906">3 Oct 07:45</text><text class="tm" x="772" y="906">3 Oct 08:25</text><text class="tm" x="836" y="906">3 Oct 09:05</text><text class="tm" x="900" y="906">3 Oct 09:45</text><text class="tm" x="964" y="906">3 Oct 10:25</text>

<!-- tabs -->
<rect y="913" width="1277" height="2" fill="#fbfbfb"/>
<rect y="915" width="1277" height="23" fill="#f0f0f0"/>
<path d="M1.500 936V917h93" fill="none" stroke="#c8c8c8"/>
<text x="18" y="930" font-size="12" fill="#7a7a7a" textLength="65" lengthAdjust="spacingAndGlyphs">GBPUSD,M5</text>
<path d="M95.500 936V916.500h86V936H95.500" fill="#fff" stroke="#111"/>
<text x="106" y="930" font-size="12" fill="#111" textLength="65" lengthAdjust="spacingAndGlyphs">GBPUSD,M5</text>
<path d="M1252 922v8l-4-4zM1268 922v8l4-4z" fill="#999"/>

<!-- status -->
<rect y="936" width="1277" height="1" fill="#f0f0f0"/>
<rect y="940" width="1277" height="1" fill="#a0a0a0"/>
<rect x="15" y="941" width="1262" height="21" fill="#fff"/>
<rect y="962" width="1277" height="1" fill="#dcdcdc"/>
<rect y="965" width="1277" height="1" fill="#9a9a9a"/>
<path d="M5 944l4 4M9 944l-4 4" stroke="#222" stroke-width="1.500"/>
<path d="M4 952h5M4 955h5M4 958h5" stroke="#aaa"/>
<circle cx="24" cy="951.500" r="3.500" fill="#8c8c8c"/>
<text x="34" y="955" font-size="12" fill="#1a1a1a" textLength="623" lengthAdjust="spacing" xml:space="preserve">Balance: 7 406.10 USD  Profit/Loss: 151.90  Equity: 7 558.00  Margin: 78.32  Free margin: 7 479.68  Margin level: 9650.15%</text>

<!-- taskbar -->
<rect y="966" width="1277" height="40" fill="#0a0d12"/>
<path d="M16 981l7.500-1v7H16zM24.500 980l8.500-1.500V987h-8.500zM16 988h7.500v7l-7.500-1zM24.500 988H33v8.500l-8.500-1.500z" fill="#fff"/>
<rect x="65.500" y="980.500" width="14" height="13" fill="none" stroke="#fff" stroke-width="1.500"/><path d="M62.500 982.500v10M82.500 982.500v10" stroke="#fff"/>
<path d="M131 988c0-7-4-10-9-10-6 0-10 5-10 10 0 7 5 9 10 9 3 0 6-1 8-2v-4c-3 2-11 3-12-2h13zM118 984c1-3 7-3 8 0z" fill="#0f78d4" fill-rule="evenodd"/>
<path d="M160 979h8l2 3h12v15h-22z" fill="#f0c85a"/><rect x="161" y="984" width="20" height="12" fill="#f7da80"/><rect x="167" y="989" width="8" height="7" fill="#29a3e0"/>
<circle cx="219.500" cy="987" r="11" fill="#ff7a1f"/><path d="M209 985c1-6 6-10 12-9 2-1 3-1 3-1-1 1-1 2-1 2 4 2 7 6 7 10l-3-4-3 1-8-1-3 4z" fill="#ffb023"/><circle cx="218" cy="987" r="5.500" fill="#5a2ea6"/><path d="M214 984l5-4 3 6-4 5z" fill="#e5326e"/>
<circle cx="269" cy="987" r="11" fill="#dd3c2e"/><path d="M269 987l-9.500 5.500A11 11 0 0 0 271 998z" fill="#2fa84f"/><path d="M269 976a11 11 0 0 1 9.500 5.500A11 11 0 0 1 271 998l-2-11z" fill="#fbc02d"/><circle cx="269" cy="987" r="5" fill="#fff"/><circle cx="269" cy="987" r="3.800" fill="#4285f4"/>
<rect x="295" y="967" width="47" height="39" fill="#2f3339"/>
<rect x="306" y="976" width="23" height="22" rx="2" fill="#0fae4b"/>
<text x="317.500" y="987" font-size="7" font-weight="bold" fill="#fff" text-anchor="middle">FBS</text><path d="M311 991h13" stroke="#fff"/>
<rect x="249" y="1004" width="39" height="2" fill="#7fb0df"/><rect x="295" y="1004" width="47" height="2" fill="#7fb0df"/>

<!-- tray -->
<rect x="1018" y="980" width="7" height="5" fill="#888"/><path d="M1017 985h9v6l-2 2v3h-5v-3l-2-2z" fill="#9a9a9a"/><circle cx="1028" cy="991" r="5" fill="#2da84a"/><path d="M1025.500 991l2 2 3-4" fill="none" stroke="#fff"/>
<circle cx="1049" cy="985" r="6" fill="#2b78d6"/><path d="M1041 989c2-3 5-4 8-3v6c-3-1-5-1-8 0z" fill="#e8a020"/><path d="M1044 991l5-2 6 1-4 3z" fill="#3eb04a"/>
<rect x="1065" y="980" width="15" height="15" fill="#555" stroke="#888"/><path d="M1067 993a11 11 0 0 1 11-11M1070 993a8 8 0 0 1 8-8M1073 993a5 5 0 0 1 5-5" fill="none" stroke="#ddd"/>
<path d="M1091 994a4 4 0 0 1-1-8c1-4 7-5 9-2 3 0 5 2 5 5s-2 5-4 5z" fill="#6d6d6d"/><path d="M1090 983l14 12" stroke="#ddd" stroke-width="1.500"/>
<path d="M1114 982l7-2 7 2v6c0 4-3 7-7 9-4-2-7-5-7-9z" fill="#e33"/><path d="M1121 980v9h7v-7zM1114 989h7v8c-4-2-7-5-7-8z" fill="#fff"/>
<path d="M1137 984h3l5-4v15l-5-4h-3z" fill="none" stroke="#fff"/><path d="M1148 984a5 5 0 0 1 0 7M1151 981a9 9 0 0 1 0 13" fill="none" stroke="#fff"/>
<path d="M1165 993a11 11 0 0 1 11-11M1168 994a8 8 0 0 1 8-8M1172 995a5 5 0 0 1 5-5" fill="none" stroke="#ddd" stroke-width="1.300"/>
<rect x="1186" y="981" width="14" height="10" fill="#0e3f80" stroke="#5f9fe0"/><path d="M1188 989l2-4 2 2 2-3 2 4" fill="none" stroke="#fff"/><path d="M1192 992v2M1189 995h7" stroke="#aaa"/>
<text x="1217" y="982" font-size="12.500" fill="#fff" textLength="47" lengthAdjust="spacingAndGlyphs">12:35 PM</text>
<text x="1215" y="1000" font-size="12.500" fill="#fff" textLength="51" lengthAdjust="spacingAndGlyphs">10/3/2022</text>
</svg>
</body></html>
